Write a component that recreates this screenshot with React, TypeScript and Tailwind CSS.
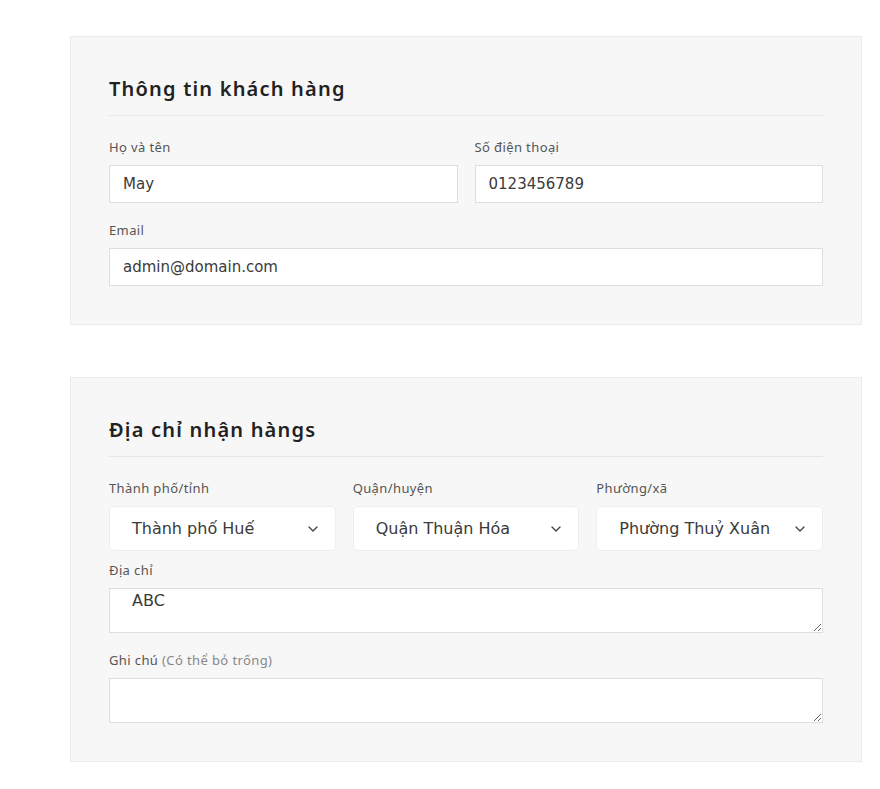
import { ChevronDown } from 'lucide-react'

const font = { fontFamily: '"DejaVu Sans", "Noto Sans", sans-serif' }
const noto = { fontFamily: '"Noto Sans", "DejaVu Sans", sans-serif' }

function Label({ children }: { children: React.ReactNode }) {
   return (
      <label className="text-[13px] tracking-[0.03em] text-[#555] leading-[20px] mb-[8px]" style={noto}>
         {children}
      </label>
   )
}

function Field({ label, value }: { label: string; value: string }) {
   return (
      <div className="flex flex-col">
         <Label>{label}</Label>
         <input
            defaultValue={value}
            className="h-[38px] w-full border border-[#dedede] bg-white px-[13px] text-[15px] text-[#3a3a3a] outline-none"
         />
      </div>
   )
}

function Select({ label, value }: { label: string; value: string }) {
   return (
      <div className="flex flex-col">
         <Label>{label}</Label>
         <div className="flex h-[45px] items-center justify-between rounded-[5px] border border-[#eeeeee] bg-white pl-[22px] pr-[14px] text-[16px] text-[#3a3a3a]">
            <span>{value}</span>
            <ChevronDown className="h-4 w-4 text-[#444]" strokeWidth={2} />
         </div>
      </div>
   )
}

function Area({ label, hint, value }: { label: string; hint?: string; value: string }) {
   return (
      <div className="flex flex-col">
         <Label>
            {label} {hint && <span className="text-[#888]">{hint}</span>}
         </Label>
         <textarea
            defaultValue={value}
            className="block h-[45px] w-full border border-[#dedede] bg-white px-[22px] pt-[1px] text-[16px] leading-[22px] text-[#3a3a3a] outline-none"
         />
      </div>
   )
}

function Card({ title, children }: { title: string; children: React.ReactNode }) {
   return (
      <section className="border border-[#ebebeb] bg-[#f7f7f7] px-[38px] pt-[36px] pb-[38px]">
         <h2
            className="text-[20px] font-semibold tracking-[0.06em] text-[#222] leading-[32px] pb-[10px] border-b border-[#e6e6e6] mb-[21px]"
            style={noto}
         >
            {title}
         </h2>
         {children}
      </section>
   )
}

export default function App() {
   return (
      <div className="min-h-screen bg-white pt-[36px] pl-[70px] pr-[18px]" style={font}>
         <div className="flex flex-col gap-[52px]">
            <Card title="Thông tin khách hàng">
               <div className="grid grid-cols-2 gap-x-[17px] gap-y-[17px]">
                  <Field label="Họ và tên" value="May" />
                  <Field label="Số điện thoại" value="0123456789" />
                  <div className="col-span-2">
                     <Field label="Email" value="admin@domain.com" />
                  </div>
               </div>
            </Card>
            <Card title="Địa chỉ nhận hàngs">
               <div className="grid grid-cols-3 gap-x-[17px]">
                  <Select label="Thành phố/tỉnh" value="Thành phố Huế" />
                  <Select label="Quận/huyện" value="Quận Thuận Hóa" />
                  <Select label="Phường/xã" value="Phường Thuỷ Xuân" />
               </div>
               <div className="mt-[9px] flex flex-col gap-[17px]">
                  <Area label="Địa chỉ" value="ABC" />
                  <Area label="Ghi chú" hint="(Có thể bỏ trống)" value="" />
               </div>
            </Card>
         </div>
      </div>
   )
}
